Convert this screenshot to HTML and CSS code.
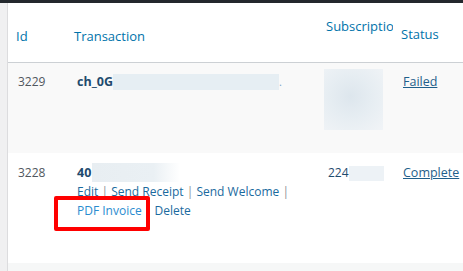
FILE: index.html
```html
<!DOCTYPE html>
<html>
<head>
<meta charset="utf-8">
<link rel="stylesheet" href="styles.css">
</head>
<body>
<div class="topbar"></div>
<div class="page">
  <div class="sidebar-edge"></div>
  <div class="content">
    <table class="list">
      <colgroup>
        <col class="c-id"><col class="c-tx"><col class="c-sub"><col class="c-status">
      </colgroup>
      <thead>
        <tr>
          <th class="h-id">Id</th>
          <th class="h-tx">Transaction</th>
          <th class="h-sub"><span class="clip">Subscription</span></th>
          <th class="h-status">Status</th>
        </tr>
      </thead>
      <tbody>
        <tr class="alt r1">
          <td class="num">3229</td>
          <td class="tx"><span class="title">ch_0G</span><span class="blur b-tx1"></span><span class="dot">.</span></td>
          <td class="sub"><span class="blur b-sub1"></span></td>
          <td class="st"><a class="status" href="#">Failed</a></td>
        </tr>
        <tr class="r2">
          <td class="num">3228</td>
          <td class="tx">
            <div class="line"><span class="title">40</span><span class="blur b-tx2"></span></div>
            <div class="line actions"><a href="#">Edit</a> <span class="sep">|</span> <a href="#">Send Receipt</a> <span class="sep">|</span> <a href="#">Send Welcome</a> <span class="sep">|</span></div>
            <div class="line actions"><span class="hl"><a class="pdf" href="#">PDF Invoice</a></span> <span class="sep">|</span> <a href="#">Delete</a></div>
          </td>
          <td class="sub subnum"><span>224</span><span class="blur b-sub2"></span></td>
          <td class="st"><a class="status" href="#">Complete</a></td>
        </tr>
        <tr class="alt r3"><td></td><td></td><td></td><td></td></tr>
      </tbody>
    </table>
  </div>
</div>
</body>
</html>
```
FILE: styles.css
```css
html, body {
  margin: 0;
  padding: 0;
  overflow: hidden;
  background: #f6f7f7;
  font-family: "Open Sans", "Noto Sans", sans-serif;
}
.topbar {
  height: 3px;
  background: #23282d;
}
.page {
  display: flex;
  height: 268px;
}
.sidebar-edge {
  width: 7px;
  flex: none;
  background: #f0f0f1;
  border-right: 1px solid #dcdcde;
}
.content {
  flex: 1;
  overflow: hidden;
}
.list {
  border-collapse: collapse;
  table-layout: fixed;
  width: 520px;
  background: #fff;
}
.c-id { width: 58px; }
.c-tx { width: 252px; }
.c-sub { width: 75px; }
.c-status { width: 135px; }
thead tr { height: 59px; }
th {
  padding: 0;
  text-align: left;
  font-weight: 400;
  font-size: 13px;
  line-height: 19px;
  color: #0073aa;
  vertical-align: top;
  border-bottom: 1px solid #ccd0d4;
}
.h-id { padding: 24px 0 0 8px; }
.h-tx { padding: 24px 0 0 8px; }
.h-sub { padding: 14px 0 0 8px; }
.h-status { padding: 22px 0 0 8px; }
.clip {
  display: block;
  white-space: nowrap;
  overflow: hidden;
  width: 67px;
}
td {
  padding: 0;
  vertical-align: top;
  font-size: 12px;
  line-height: 19px;
  color: #50575e;
}
.alt td { background: #f9f9f9; }
.r1 { height: 91px; }
.r2 { height: 110px; }
.r3 { height: 10px; }
.r3 td { background: #f6f7f7; }
.r1 td { padding-top: 9px; }
.r2 td { padding-top: 10px; }
.num { padding-left: 10px !important; }
.tx { padding-left: 11px !important; }
.r1 .sub { padding: 6px 0 0 6px; }
.r2 .sub { padding-left: 10px; }
.st { padding-left: 10px !important; }
.title {
  font-weight: 700;
  color: #1f4b6e;
  font-size: 12.5px;
}
.blur {
  display: inline-block;
  vertical-align: top;
  background: #e6eef3;
}
.b-tx1 { width: 166px; height: 16px; margin-top: 2px; }
.dot { color: #7aa6c8; font-size: 11px; }
.b-sub1 {
  width: 59px;
  height: 61px;
  background: radial-gradient(circle at 45% 45%, #dde6ed 0%, #e6edf2 45%, #f1f4f7 100%);
}
.line { height: 19px; white-space: nowrap; }
.b-tx2 {
  width: 88px; height: 19px; margin-left: 1px;
  background: linear-gradient(90deg, #e8eef2 0%, #eaf0f4 70%, #ffffff 100%);
}
.actions a { color: #1a6a9e; text-decoration: none; }
.actions .sep { color: #8c8f94; }
.hl {
  position: relative;
  display: inline-block;
}
.hl::after {
  content: "";
  position: absolute;
  left: -23px; right: -8px; top: -5px; bottom: -11px;
  border: 4px solid #f00;
  border-radius: 2px;
}
.actions a.pdf { color: #2a8ccf; }
.subnum { color: #1f4b6e; }
.subnum span { vertical-align: top; }
.b-sub2 { width: 35px; height: 15px; margin-top: 3px; background: #edf2f6; }
.status {
  color: #1f5f8b;
  font-size: 12.5px;
  text-decoration: underline;
}
```
